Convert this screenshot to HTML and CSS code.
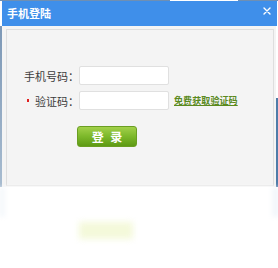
FILE: index.html
```html
<!DOCTYPE html>
<html>
<head>
<meta charset="utf-8">
<link rel="stylesheet" href="styles.css">
</head>
<body>
<div class="topline"></div>
<div class="dialog">
  <div class="header">
    <span class="title">手机登陆</span>
    <svg class="close" width="8" height="8" viewBox="0 0 8 8"><path d="M1 1L7 7M7 1L1 7" stroke="#fff" stroke-width="1.4" stroke-linecap="round"/></svg>
  </div>
  <div class="frame">
    <div class="strip-left"></div>
    <div class="body">
      <div class="panel">
        <div class="row">
          <label class="label">手机号码：</label>
          <div class="input"></div>
        </div>
        <div class="row">
          <label class="label"><span class="req"></span>验证码：</label>
          <div class="input"></div>
          <a class="link">免费获取验证码</a>
        </div>
        <div class="btnrow">
          <div class="btn">登 录</div>
        </div>
      </div>
    </div>
    <div class="strip-right"></div>
  </div>
  <div class="reflection">
    <div class="refl-edges"></div>
    <div class="refl-btn"></div>
  </div>
</div>
</body>
</html>
```
FILE: styles.css
```css
html, body { margin: 0; padding: 0; background: #fff; }
body { width: 278px; height: 268px; overflow: hidden; font-family: "Noto Sans CJK SC", "Noto Sans", sans-serif; }
.topline { height: 1px; background: linear-gradient(to right, #6f8fb3 0 170px, #fff 170px 238px, #6f8fb3 238px); }
.dialog { width: 278px; }
.header {
  margin-left: 2px; width: 275px; height: 25px; background: #3f8fea;
  display: flex; align-items: center; justify-content: space-between;
  box-sizing: border-box; padding: 0 6px 0 5px;
}
.title { color: #fff; font-size: 11px; font-weight: bold; line-height: 25px; margin-top: -1px; }
.close { margin-top: -6px; }
.frame { display: flex; height: 161px; }
.strip-left { width: 2px; background: linear-gradient(#7d98b6, #a8bcd0); }
.strip-right { width: 2px; background: linear-gradient(#fff 0 72px, #4f7ca8 72px); }
.body { flex: 1; background: #f4f4f4; padding: 3px 2px 1px 4px; box-sizing: border-box; }
.panel { height: 100%; box-sizing: border-box; border: 1px solid #dedede; border-bottom-color: #e6e6e6; padding-top: 36px; }
.row { display: flex; align-items: center; height: 19px; margin-bottom: 6px; }
.label { width: 72px; text-align: right; font-size: 11px; color: #3c3c3c; display: flex; justify-content: flex-end; align-items: center; }
.req { width: 2px; height: 3px; background: #e02020; margin-right: 6px; }
.input { width: 88px; height: 17px; background: #fff; border: 1px solid #e0e0e0; border-radius: 2px; }
.link { margin-left: 5px; font-size: 9px; font-weight: bold; color: #5b8a1e; text-decoration: underline; letter-spacing: 0.1px; }
.btnrow { padding-left: 70px; margin-top: 16px; }
.btn {
  width: 58px; height: 19px; border: 1px solid #6a9e22; border-radius: 3px;
  background: linear-gradient(#a2d04a, #7cb82a 50%, #5e9a14);
  color: #fff; font-size: 12px; font-weight: bold; text-align: center; line-height: 19px;
  word-spacing: 4px;
}
.reflection { height: 80px; }
.refl-edges { height: 30px; background: linear-gradient(to right, #eef4f9, #fff 7px, #fff 270px, #eaf1f8); filter: blur(2px); }
.refl-btn { margin: 5px 0 0 79px; width: 54px; height: 17px; background: #f4f9da; filter: blur(3px); }
```
